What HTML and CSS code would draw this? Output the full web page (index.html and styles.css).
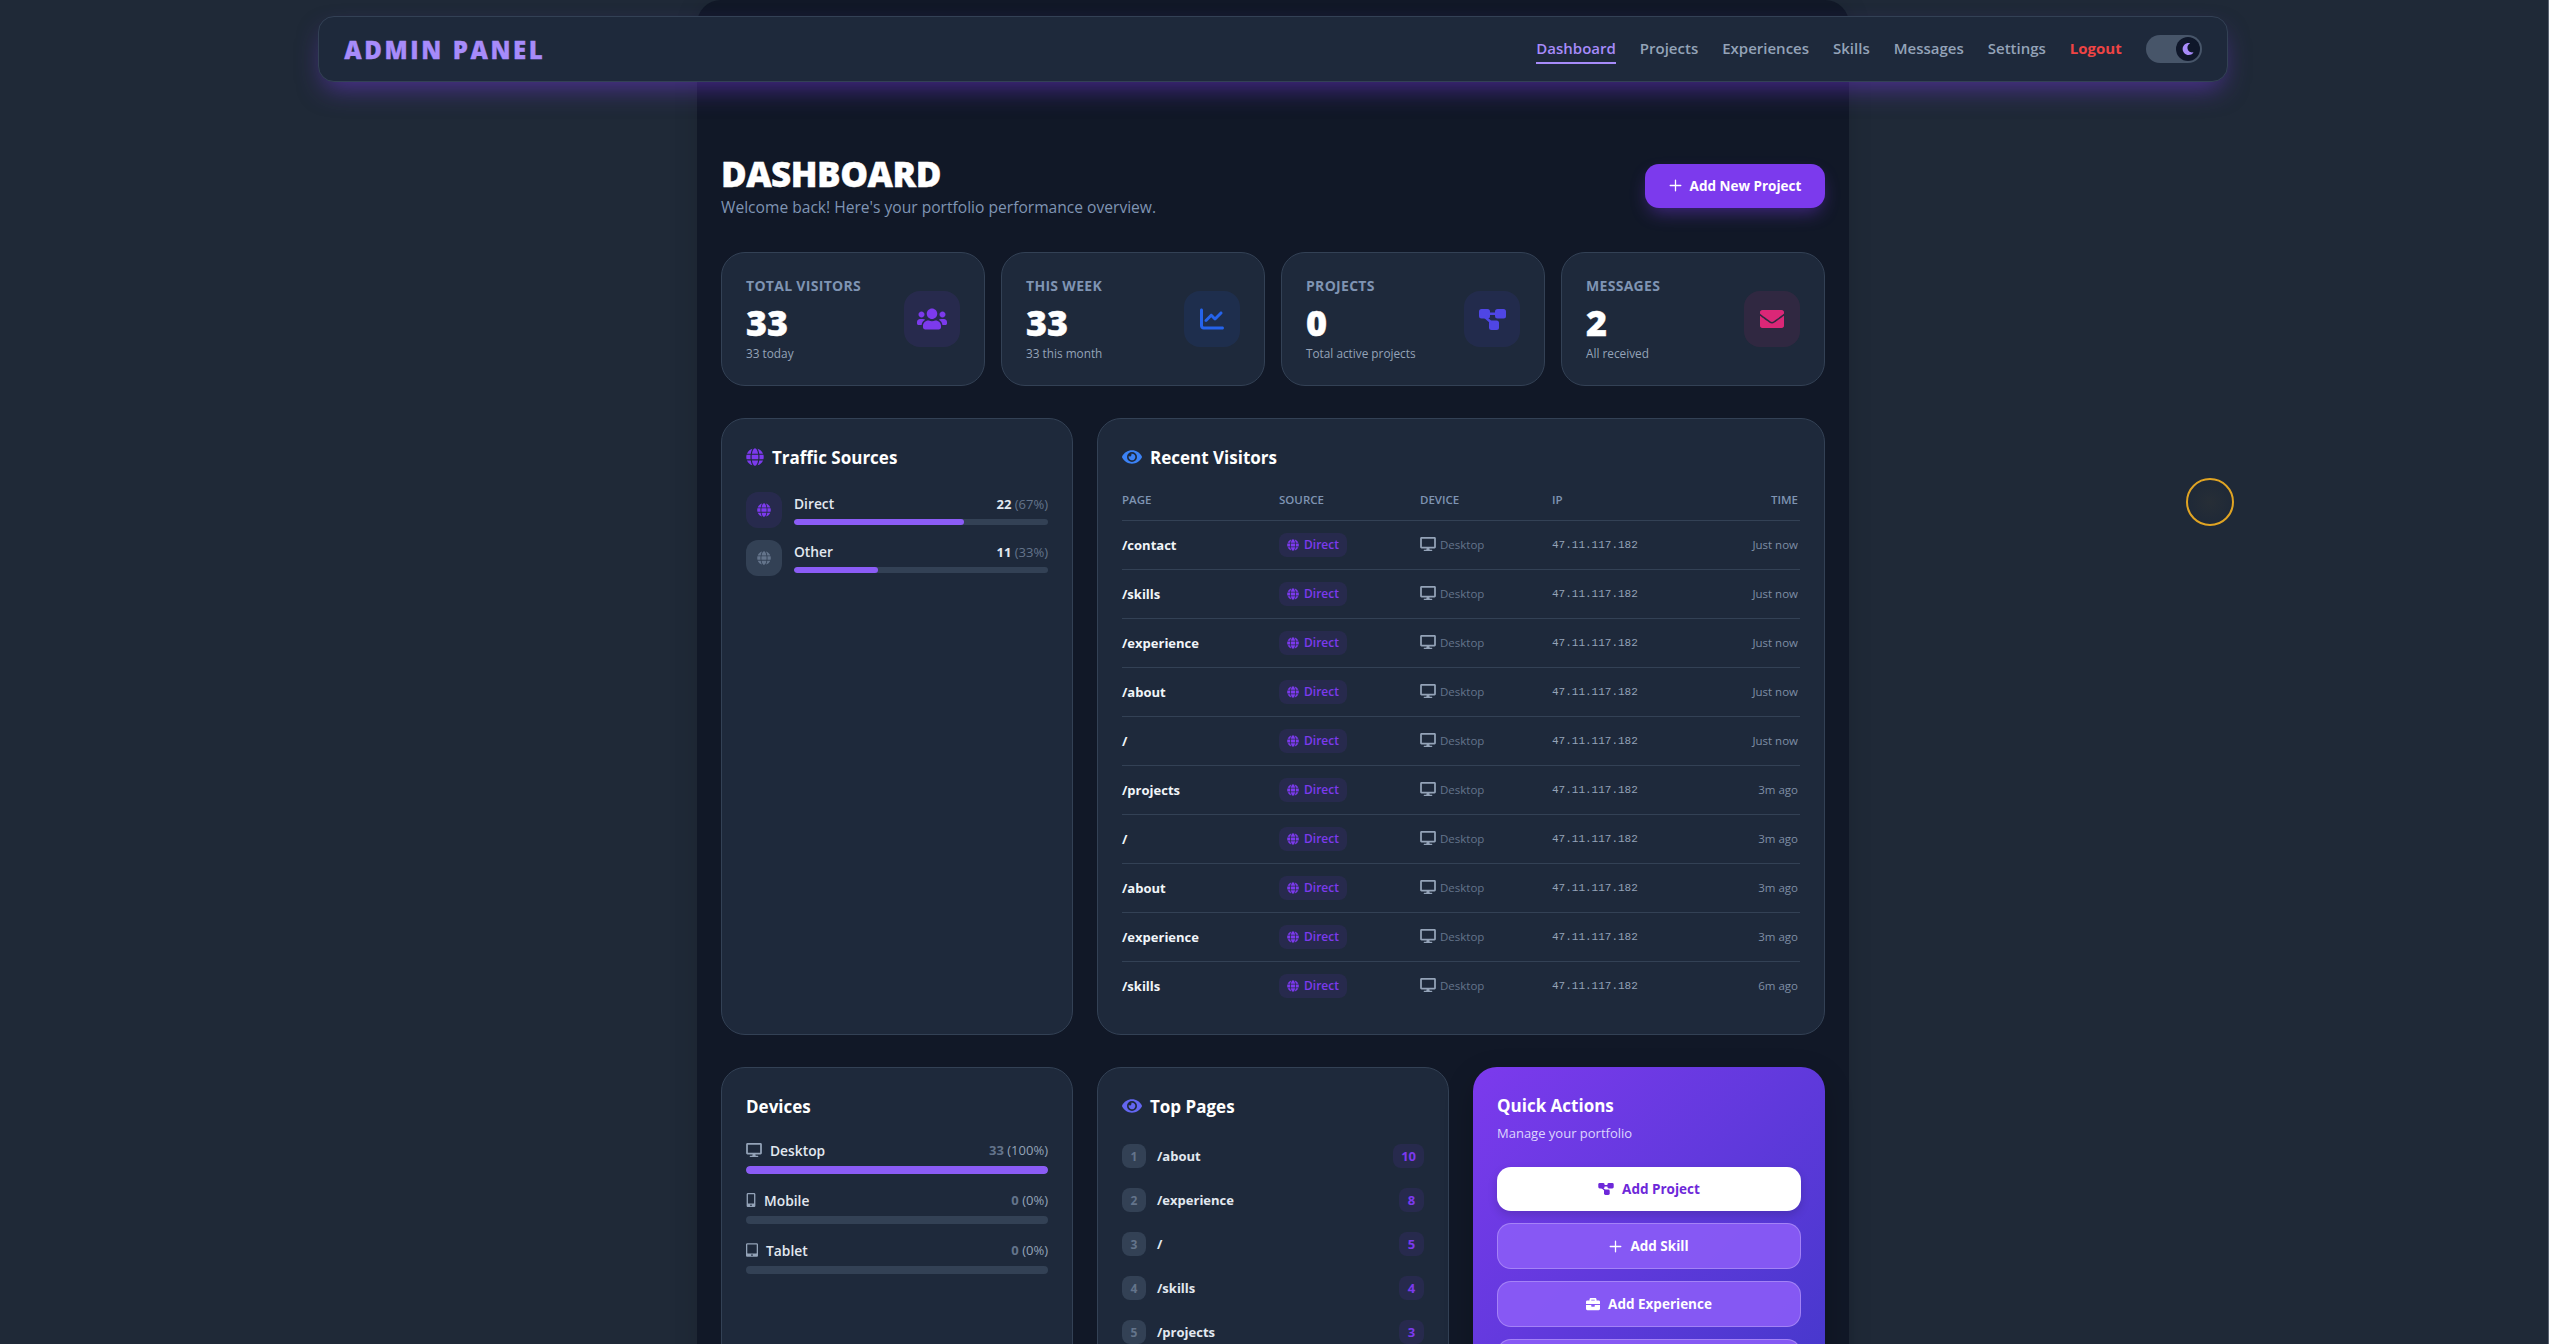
FILE: index.html
```html
<!DOCTYPE html>
<html lang="en">
<head>
    <meta charset="UTF-8" />
    <meta name="viewport" content="width=device-width, initial-scale=1.0"/>
    <title>Admin Panel</title>
    <link rel="stylesheet" href="styles.css">
</head>
<body>

<svg class="sprite" xmlns="http://www.w3.org/2000/svg">
    <symbol id="i-users" viewBox="0 0 640 512"><path d="M96 224c35.300 0 64-28.700 64-64s-28.700-64-64-64-64 28.700-64 64 28.700 64 64 64zm448 0c35.300 0 64-28.700 64-64s-28.700-64-64-64-64 28.700-64 64 28.700 64 64 64zm32 32h-64c-17.600 0-33.500 7.100-45.100 18.600 40.300 22.100 68.900 62 75.100 109.400h66c17.700 0 32-14.300 32-32v-32c0-35.300-28.700-64-64-64zm-256 0c61.900 0 112-50.100 112-112S381.900 32 320 32 208 82.100 208 144s50.100 112 112 112zm76.800 32h-8.300c-20.800 10-43.900 16-68.500 16s-47.600-6-68.500-16h-8.300C179.600 288 128 339.600 128 403.200V432c0 26.500 21.500 48 48 48h288c26.500 0 48-21.500 48-48v-28.800c0-63.600-51.600-115.200-115.200-115.200zm-223.700-13.400C161.500 263.100 145.600 256 128 256H64c-35.300 0-64 28.700-64 64v32c0 17.700 14.300 32 32 32h65.900c6.300-47.400 34.900-87.300 75.200-109.400z"/></symbol>
    <symbol id="i-chart" viewBox="0 0 512 512"><path d="M64 64c0-17.700-14.300-32-32-32S0 46.300 0 64V400c0 44.200 35.800 80 80 80H480c17.700 0 32-14.300 32-32s-14.300-32-32-32H80c-8.800 0-16-7.200-16-16V64zm406.600 86.600c12.500-12.500 12.500-32.800 0-45.300s-32.800-12.500-45.300 0L320 210.700l-57.400-57.400c-12.500-12.500-32.800-12.500-45.300 0l-112 112c-12.500 12.500-12.500 32.800 0 45.300s32.800 12.500 45.300 0L240 221.300l57.400 57.400c12.500 12.500 32.800 12.500 45.300 0l128-128z"/></symbol>
    <symbol id="i-diagram" viewBox="0 0 27 21">
        <rect x="0" y="0" width="11" height="9.500" rx="2.500"/>
        <rect x="16" y="0" width="11" height="9.500" rx="2.500"/>
        <rect x="10" y="11.500" width="10" height="9.500" rx="2.500"/>
        <path d="M10 4.750h7M6 8l7.500 6.500" fill="none" stroke="currentColor" stroke-width="2.500"/>
    </symbol>
    <symbol id="i-envelope" viewBox="0 0 512 512"><path d="M502.300 190.800c3.900-3.100 9.700-.2 9.700 4.700V400c0 26.500-21.500 48-48 48H48c-26.500 0-48-21.500-48-48V195.600c0-5 5.700-7.800 9.700-4.700 22.400 17.400 52.100 39.500 154.100 113.600 21.100 15.400 56.700 47.800 92.200 47.600 35.700.3 72-32.800 92.300-47.600 102-74.100 131.600-96.300 154-113.700zM256 320c23.200.4 56.600-29.200 73.400-41.400 132.700-96.300 142.800-104.700 173.400-128.700 5.800-4.500 9.200-11.500 9.200-18.900v-19c0-26.500-21.500-48-48-48H48C21.500 64 0 85.500 0 112v19c0 7.400 3.400 14.300 9.200 18.900 30.600 23.900 40.700 32.400 173.400 128.700 16.800 12.200 50.200 41.800 73.400 41.400z"/></symbol>
    <symbol id="i-globe" viewBox="0 0 496 512"><path d="M336.500 160C322 70.700 287.800 8 248 8s-74 62.700-88.500 152h177zM152 256c0 22.200 1.200 43.500 3.300 64h185.300c2.100-20.500 3.300-41.800 3.300-64s-1.200-43.500-3.300-64H155.300c-2.100 20.500-3.300 41.800-3.300 64zm324.700-96c-28.600-67.900-86.500-120.400-158-141.600 24.400 33.800 41.200 84.700 50 141.600h108zM177.200 18.400C105.800 39.600 47.800 92.100 19.300 160h108c8.700-56.900 25.500-107.800 49.900-141.600zM487.400 192H372.700c2.100 21 3.300 42.500 3.300 64s-1.200 43-3.300 64h114.600c5.500-20.500 8.600-41.800 8.600-64s-3.100-43.500-8.500-64zM120 256c0-21.500 1.200-43 3.300-64H8.600C3.200 212.500 0 233.800 0 256s3.200 43.500 8.600 64h114.600c-2-21-3.200-42.500-3.200-64zm39.500 96c14.500 89.300 48.700 152 88.500 152s74-62.700 88.500-152h-177zm159.300 141.600c71.400-21.200 129.400-73.700 158-141.600h-108c-8.800 56.900-25.600 107.800-50 141.600zM19.300 352c28.600 67.900 86.500 120.400 158 141.600-24.400-33.800-41.200-84.700-50-141.600h-108z"/></symbol>
    <symbol id="i-eye" viewBox="0 0 576 512"><path d="M572.520 241.400C518.290 135.590 410.930 64 288 64S57.680 135.640 3.480 241.410a32.350 32.350 0 0 0 0 29.190C57.710 376.410 165.070 448 288 448s230.320-71.640 284.520-177.410a32.350 32.350 0 0 0 0-29.190zM288 400a144 144 0 1 1 144-144 143.930 143.930 0 0 1-144 144zm0-240a95.310 95.310 0 0 0-25.310 3.790 47.850 47.850 0 0 1-66.900 66.900A95.780 95.780 0 1 0 288 160z"/></symbol>
    <symbol id="i-desktop" viewBox="0 0 576 512"><path d="M528 0H48C21.500 0 0 21.500 0 48v320c0 26.500 21.500 48 48 48h192l-16 48h-72c-13.300 0-24 10.700-24 24s10.700 24 24 24h272c13.300 0 24-10.700 24-24s-10.700-24-24-24h-72l-16-48h192c26.500 0 48-21.500 48-48V48c0-26.500-21.500-48-48-48zm-16 352H64V64h448v288z"/></symbol>
    <symbol id="i-mobile" viewBox="0 0 320 512"><path d="M272 0H48C21.500 0 0 21.500 0 48v416c0 26.500 21.500 48 48 48h224c26.500 0 48-21.500 48-48V48c0-26.500-21.500-48-48-48zM160 480c-17.700 0-32-14.300-32-32s14.300-32 32-32 32 14.300 32 32-14.300 32-32 32zm112-108c0 6.600-5.400 12-12 12H60c-6.600 0-12-5.400-12-12V60c0-6.600 5.400-12 12-12h200c6.600 0 12 5.400 12 12v312z"/></symbol>
    <symbol id="i-tablet" viewBox="0 0 448 512"><path d="M400 0H48C21.500 0 0 21.500 0 48v416c0 26.500 21.500 48 48 48h352c26.500 0 48-21.500 48-48V48c0-26.500-21.500-48-48-48zM224 480c-17.700 0-32-14.300-32-32s14.300-32 32-32 32 14.300 32 32-14.300 32-32 32zm176-108c0 6.600-5.400 12-12 12H60c-6.600 0-12-5.400-12-12V60c0-6.600 5.400-12 12-12h328c6.600 0 12 5.400 12 12v312z"/></symbol>
    <symbol id="i-plus" viewBox="0 0 16 16"><path d="M8 1.500v13M1.500 8h13" fill="none" stroke="currentColor" stroke-width="1.600" stroke-linecap="round"/></symbol>
    <symbol id="i-briefcase" viewBox="0 0 512 512"><path d="M320 336c0 8.840-7.160 16-16 16h-96c-8.840 0-16-7.160-16-16v-48H0v144c0 25.600 22.400 48 48 48h416c25.600 0 48-22.400 48-48V288H320v48zm144-208h-80V80c0-25.600-22.400-48-48-48H176c-25.600 0-48 22.400-48 48v48H48c-25.600 0-48 22.400-48 48v80h512v-80c0-25.600-22.400-48-48-48zm-144 0H192V96h128v32z"/></symbol>
    <symbol id="i-moon" viewBox="0 0 512 512"><path d="M283.211 512c78.962 0 151.079-35.925 198.857-94.792 7.068-8.708-.639-21.430-11.562-19.350-124.203 23.654-238.262-71.576-238.262-196.954 0-72.222 38.662-138.635 101.498-174.394 9.686-5.512 7.250-20.197-3.756-22.230A258.156 258.156 0 0 0 283.211 0c-141.309 0-256 114.511-256 256 0 141.309 114.511 256 256 256z"/></symbol>
</svg>

<div class="app">
    <div class="page">
        <nav class="navbar">
            <span class="logo">ADMIN PANEL</span>
            <div class="nav-links">
                <a class="active">Dashboard</a>
                <a>Projects</a>
                <a>Experiences</a>
                <a>Skills</a>
                <a>Messages</a>
                <a>Settings</a>
                <a class="logout">Logout</a>
                <div class="theme-toggle">
                    <span class="toggle-knob"><svg class="icon-moon"><use href="#i-moon"/></svg></span>
                </div>
            </div>
        </nav>

        <main class="main">
            <header class="page-head">
                <div>
                    <h1>DASHBOARD</h1>
                    <p>Welcome back! Here's your portfolio performance overview.</p>
                </div>
                <button class="add-btn"><svg class="icon-13"><use href="#i-plus"/></svg>Add New Project</button>
            </header>

            <section class="stats">
                <div class="card stat">
                    <div>
                        <div class="stat-label">TOTAL VISITORS</div>
                        <div class="stat-value">33</div>
                        <div class="stat-sub">33 today</div>
                    </div>
                    <div class="stat-icon purple"><svg class="icon-users"><use href="#i-users"/></svg></div>
                </div>
                <div class="card stat">
                    <div>
                        <div class="stat-label">THIS WEEK</div>
                        <div class="stat-value">33</div>
                        <div class="stat-sub">33 this month</div>
                    </div>
                    <div class="stat-icon blue"><svg class="icon-24"><use href="#i-chart"/></svg></div>
                </div>
                <div class="card stat">
                    <div>
                        <div class="stat-label">PROJECTS</div>
                        <div class="stat-value">0</div>
                        <div class="stat-sub">Total active projects</div>
                    </div>
                    <div class="stat-icon indigo"><svg class="icon-diagram"><use href="#i-diagram"/></svg></div>
                </div>
                <div class="card stat">
                    <div>
                        <div class="stat-label">MESSAGES</div>
                        <div class="stat-value">2</div>
                        <div class="stat-sub">All received</div>
                    </div>
                    <div class="stat-icon pink"><svg class="icon-24"><use href="#i-envelope"/></svg></div>
                </div>
            </section>

            <section class="row">
                <div class="card panel">
                    <h3 class="panel-title"><svg class="icon-18 c-purple"><use href="#i-globe"/></svg>Traffic Sources</h3>
                    <div class="sources">
                        <div class="source">
                            <span class="source-icon direct"><svg class="icon-14"><use href="#i-globe"/></svg></span>
                            <div class="source-body">
                                <div class="source-line"><span>Direct</span><span class="source-num"><b>22</b> (67%)</span></div>
                                <div class="bar thin"><div class="bar-fill" style="width:67%"></div></div>
                            </div>
                        </div>
                        <div class="source">
                            <span class="source-icon other"><svg class="icon-14"><use href="#i-globe"/></svg></span>
                            <div class="source-body">
                                <div class="source-line"><span>Other</span><span class="source-num"><b>11</b> (33%)</span></div>
                                <div class="bar thin"><div class="bar-fill" style="width:33%"></div></div>
                            </div>
                        </div>
                    </div>
                </div>

                <div class="card panel panel-wide">
                    <h3 class="panel-title"><svg class="icon-eye c-blue"><use href="#i-eye"/></svg>Recent Visitors</h3>
                    <table class="visitors">
                        <thead>
                            <tr><th class="col-page">PAGE</th><th class="col-source">SOURCE</th><th class="col-device">DEVICE</th><th class="col-ip">IP</th><th class="col-time">TIME</th></tr>
                        </thead>
                        <tbody>
                            <tr><td class="cell-page">/contact</td><td><span class="badge"><svg class="icon-12"><use href="#i-globe"/></svg>Direct</span></td><td class="cell-device"><svg class="icon-14"><use href="#i-desktop"/></svg>Desktop</td><td class="cell-ip">47.11.117.182</td><td class="cell-time">Just now</td></tr>
                            <tr><td class="cell-page">/skills</td><td><span class="badge"><svg class="icon-12"><use href="#i-globe"/></svg>Direct</span></td><td class="cell-device"><svg class="icon-14"><use href="#i-desktop"/></svg>Desktop</td><td class="cell-ip">47.11.117.182</td><td class="cell-time">Just now</td></tr>
                            <tr><td class="cell-page">/experience</td><td><span class="badge"><svg class="icon-12"><use href="#i-globe"/></svg>Direct</span></td><td class="cell-device"><svg class="icon-14"><use href="#i-desktop"/></svg>Desktop</td><td class="cell-ip">47.11.117.182</td><td class="cell-time">Just now</td></tr>
                            <tr><td class="cell-page">/about</td><td><span class="badge"><svg class="icon-12"><use href="#i-globe"/></svg>Direct</span></td><td class="cell-device"><svg class="icon-14"><use href="#i-desktop"/></svg>Desktop</td><td class="cell-ip">47.11.117.182</td><td class="cell-time">Just now</td></tr>
                            <tr><td class="cell-page">/</td><td><span class="badge"><svg class="icon-12"><use href="#i-globe"/></svg>Direct</span></td><td class="cell-device"><svg class="icon-14"><use href="#i-desktop"/></svg>Desktop</td><td class="cell-ip">47.11.117.182</td><td class="cell-time">Just now</td></tr>
                            <tr><td class="cell-page">/projects</td><td><span class="badge"><svg class="icon-12"><use href="#i-globe"/></svg>Direct</span></td><td class="cell-device"><svg class="icon-14"><use href="#i-desktop"/></svg>Desktop</td><td class="cell-ip">47.11.117.182</td><td class="cell-time">3m ago</td></tr>
                            <tr><td class="cell-page">/</td><td><span class="badge"><svg class="icon-12"><use href="#i-globe"/></svg>Direct</span></td><td class="cell-device"><svg class="icon-14"><use href="#i-desktop"/></svg>Desktop</td><td class="cell-ip">47.11.117.182</td><td class="cell-time">3m ago</td></tr>
                            <tr><td class="cell-page">/about</td><td><span class="badge"><svg class="icon-12"><use href="#i-globe"/></svg>Direct</span></td><td class="cell-device"><svg class="icon-14"><use href="#i-desktop"/></svg>Desktop</td><td class="cell-ip">47.11.117.182</td><td class="cell-time">3m ago</td></tr>
                            <tr><td class="cell-page">/experience</td><td><span class="badge"><svg class="icon-12"><use href="#i-globe"/></svg>Direct</span></td><td class="cell-device"><svg class="icon-14"><use href="#i-desktop"/></svg>Desktop</td><td class="cell-ip">47.11.117.182</td><td class="cell-time">3m ago</td></tr>
                            <tr><td class="cell-page">/skills</td><td><span class="badge"><svg class="icon-12"><use href="#i-globe"/></svg>Direct</span></td><td class="cell-device"><svg class="icon-14"><use href="#i-desktop"/></svg>Desktop</td><td class="cell-ip">47.11.117.182</td><td class="cell-time">6m ago</td></tr>
                        </tbody>
                    </table>
                </div>
            </section>

            <section class="row row-bottom">
                <div class="card panel">
                    <h3 class="panel-title">Devices</h3>
                    <div class="devices">
                        <div class="device">
                            <div class="device-line"><span class="device-name"><svg class="icon-desktop"><use href="#i-desktop"/></svg>Desktop</span><span class="device-num"><b>33</b> (100%)</span></div>
                            <div class="bar"><div class="bar-fill" style="width:100%"></div></div>
                        </div>
                        <div class="device">
                            <div class="device-line"><span class="device-name"><svg class="icon-phone"><use href="#i-mobile"/></svg>Mobile</span><span class="device-num"><b>0</b> (0%)</span></div>
                            <div class="bar"></div>
                        </div>
                        <div class="device">
                            <div class="device-line"><span class="device-name"><svg class="icon-tablet"><use href="#i-tablet"/></svg>Tablet</span><span class="device-num"><b>0</b> (0%)</span></div>
                            <div class="bar"></div>
                        </div>
                    </div>
                </div>

                <div class="card panel">
                    <h3 class="panel-title"><svg class="icon-eye c-indigo"><use href="#i-eye"/></svg>Top Pages</h3>
                    <div class="top-pages">
                        <div class="top-page"><span class="rank">1</span><span class="top-name">/about</span><span class="count">10</span></div>
                        <div class="top-page"><span class="rank">2</span><span class="top-name">/experience</span><span class="count">8</span></div>
                        <div class="top-page"><span class="rank">3</span><span class="top-name">/</span><span class="count">5</span></div>
                        <div class="top-page"><span class="rank">4</span><span class="top-name">/skills</span><span class="count">4</span></div>
                        <div class="top-page"><span class="rank">5</span><span class="top-name">/projects</span><span class="count">3</span></div>
                    </div>
                </div>

                <div class="quick">
                    <h3>Quick Actions</h3>
                    <p>Manage your portfolio</p>
                    <div class="quick-list">
                        <a class="quick-btn primary"><svg class="icon-small-diagram"><use href="#i-diagram"/></svg>Add Project</a>
                        <a class="quick-btn"><svg class="icon-13"><use href="#i-plus"/></svg>Add Skill</a>
                        <a class="quick-btn"><svg class="icon-14"><use href="#i-briefcase"/></svg>Add Experience</a>
                        <a class="quick-btn"></a>
                    </div>
                </div>
            </section>
        </main>

        <div class="cursor-ring"></div>
    </div>
    <div class="scrollbar"></div>
</div>

</body>
</html>
```

FILE: styles.css
```css
* {
  box-sizing: border-box;
}

html, body {
  height: 100%;
  margin: 0;
}

body {
  font-family: 'Open Sans', 'Noto Sans', sans-serif;
  background-color: #1f2937;
  color: #f1f5f9;
  overflow: hidden;
}

svg {
  fill: currentColor;
  flex-shrink: 0;
}

.sprite {
  display: none;
}

.app {
  display: flex;
  height: 100vh;
  overflow: hidden;
}

.page {
  position: relative;
  flex: 1;
  min-width: 0;
  overflow: hidden;
}

.scrollbar {
  width: 3px;
  border-right: 1px solid #5b6472;
  background: #1f2937;
}

/* navbar floats above the page */
.navbar {
  position: absolute;
  top: 16px;
  left: 12.5%;
  width: 75%;
  height: 66px;
  padding: 0 25px;
  display: flex;
  align-items: center;
  justify-content: space-between;
  background: #1e293b;
  border: 1px solid #334155;
  border-radius: 16px;
  box-shadow: 0 12px 26px -6px rgba(124, 58, 237, 0.5);
  z-index: 5;
}

.logo {
  font-size: 24px;
  font-weight: 800;
  letter-spacing: 2.6px;
  color: #a78bfa;
  -webkit-text-stroke: 0.3px #a78bfa;
}

.nav-links {
  display: flex;
  align-items: center;
  gap: 24px;
}

.nav-links a {
  font-size: 15px;
  font-weight: 600;
  color: #94a3b8;
  padding: 4px 0;
  border-bottom: 2px solid transparent;
}

.nav-links a.active {
  color: #a78bfa;
  border-bottom-color: #a78bfa;
}

.nav-links a.logout {
  color: #ef4444;
  font-weight: 700;
}

.theme-toggle {
  width: 56px;
  height: 28px;
  background: #475569;
  border-radius: 14px;
  display: flex;
  justify-content: flex-end;
  align-items: center;
  padding-right: 2px;
}

.toggle-knob {
  width: 24px;
  height: 24px;
  border-radius: 50%;
  background: #0f172a;
  display: flex;
  align-items: center;
  justify-content: center;
  color: #a78bfa;
}

.icon-moon {
  width: 12px;
  height: 12px;
}

/* main column */
.main {
  width: 1152px;
  margin: 0 auto;
  padding: 154px 24px 40px;
  background: #111827;
  border-radius: 24px 24px 0 0;
  box-shadow: 0 0 24px rgba(0, 0, 0, 0.12);
}

.page-head {
  display: flex;
  align-items: center;
  justify-content: space-between;
  margin-bottom: 35px;
}

.page-head h1 {
  margin: 0;
  font-size: 35px;
  line-height: 40px;
  font-weight: 800;
  color: #fff;
  letter-spacing: -0.5px;
  -webkit-text-stroke: 0.4px #fff;
}

.page-head p {
  margin: 3px 0 0;
  font-size: 15.6px;
  line-height: 20px;
  color: #7f94b3;
}

.add-btn {
  height: 44px;
  width: 180px;
  border: none;
  border-radius: 14px;
  background: #7c3aed;
  color: #fff;
  font-family: inherit;
  font-size: 13.5px;
  font-weight: 700;
  display: flex;
  align-items: center;
  justify-content: center;
  gap: 8px;
  box-shadow: 0 8px 18px -4px rgba(124, 58, 237, 0.45);
}

.card {
  background: #1e293b;
  border: 1px solid #334155;
  border-radius: 24px;
}

.stats {
  display: grid;
  grid-template-columns: repeat(4, 1fr);
  gap: 16px;
  margin-bottom: 32px;
}

.stat {
  height: 134px;
  padding: 24px;
  display: flex;
  align-items: center;
  justify-content: space-between;
}

.stat-label {
  font-size: 14px;
  line-height: 18px;
  font-weight: 700;
  letter-spacing: 0.3px;
  color: #7f94b3;
}

.stat-value {
  margin-top: 6px;
  font-size: 36px;
  line-height: 44px;
  font-weight: 800;
  color: #fff;
  -webkit-text-stroke: 0.4px #fff;
}

.stat-sub {
  font-size: 11.8px;
  line-height: 16px;
  color: #94a3b8;
}

.stat-icon {
  width: 56px;
  height: 56px;
  border-radius: 16px;
  display: flex;
  align-items: center;
  justify-content: center;
}

.stat-icon.purple { background: rgba(124, 58, 237, 0.1); color: #7c3aed; }
.stat-icon.blue   { background: rgba(37, 99, 235, 0.1); color: #2563eb; }
.stat-icon.indigo { background: rgba(79, 70, 229, 0.1); color: #4f46e5; }
.stat-icon.pink   { background: rgba(219, 39, 119, 0.1); color: #db2777; }

.icon-users { width: 30px; height: 24px; }
.icon-diagram { width: 27px; height: 21px; }
.icon-small-diagram { width: 16px; height: 12px; }
.icon-24 { width: 24px; height: 24px; }
.icon-18 { width: 18px; height: 18px; }
.icon-eye { width: 20px; height: 18px; }
.icon-14 { width: 14px; height: 14px; }
.icon-13 { width: 13px; height: 13px; }
.icon-12 { width: 12px; height: 12px; }
.icon-desktop { width: 16px; height: 14px; }
.icon-phone { width: 10px; height: 14px; }
.icon-tablet { width: 12px; height: 14px; }

.c-purple { color: #7c3aed; }
.c-blue { color: #3b82f6; }
.c-indigo { color: #6366f1; }

.row {
  display: grid;
  grid-template-columns: 352px 1fr;
  gap: 24px;
  margin-bottom: 32px;
}

.row-bottom {
  grid-template-columns: repeat(3, 352px);
}

.panel {
  padding: 24px;
}

.panel-title {
  margin: 0;
  height: 30px;
  padding-bottom: 2px;
  display: flex;
  align-items: center;
  gap: 8px;
  font-size: 17px;
  font-weight: 700;
  color: #fff;
}

.sources {
  margin-top: 19px;
  display: flex;
  flex-direction: column;
  gap: 12px;
}

.source {
  display: flex;
  align-items: center;
  gap: 12px;
}

.source-icon {
  width: 36px;
  height: 36px;
  border-radius: 12px;
  display: flex;
  align-items: center;
  justify-content: center;
}

.source-icon.direct { background: rgba(124, 58, 237, 0.1); color: #7c3aed; }
.source-icon.other { background: #334155; color: #64748b; }

.source-body {
  flex: 1;
}

.source-line,
.device-line {
  display: flex;
  justify-content: space-between;
  align-items: center;
  font-size: 13.8px;
  font-weight: 600;
  color: #e2e8f0;
}

.source-line {
  line-height: 18px;
  margin-bottom: 6px;
}

.source-num {
  font-size: 13px;
  font-weight: 400;
  color: #64748b;
}

.source-num b {
  font-weight: 700;
  color: #e2e8f0;
}

.bar {
  height: 8px;
  background: #334155;
  border-radius: 999px;
  overflow: hidden;
}

.bar.thin {
  height: 6px;
}

.bar-fill {
  height: 100%;
  background: #8b5cf6;
  border-radius: 999px;
}

/* recent visitors */
.visitors {
  width: 100%;
  margin-top: 18px;
  table-layout: fixed;
  border-collapse: collapse;
}

.visitors th {
  height: 29px;
  padding: 0 0 11px;
  text-align: left;
  font-size: 11.5px;
  font-weight: 600;
  color: #7f94b3;
  border-bottom: 1px solid #334155;
}

.col-page { width: 157px; }
.col-source { width: 141px; }
.col-device { width: 132px; }
.col-ip { width: 130px; }

.visitors th.col-time,
.cell-time {
  text-align: right;
  padding-right: 2px;
}

.visitors td {
  height: 49px;
  padding: 0;
  border-bottom: 1px solid #334155;
}

.visitors td.cell-time {
  padding-right: 2px;
}

.visitors tr:last-child td {
  border-bottom: none;
}

.cell-page {
  font-size: 13px;
  font-weight: 700;
  color: #f1f5f9;
}

.badge {
  display: inline-flex;
  align-items: center;
  gap: 5px;
  height: 24px;
  padding: 0 8px;
  border-radius: 8px;
  background: rgba(124, 58, 237, 0.1);
  color: #7c3aed;
  font-size: 12px;
  font-weight: 600;
}

.cell-device {
  font-size: 11.5px;
  color: #64748b;
}

.cell-device svg {
  color: #94a3b8;
  width: 16px;
  margin-right: 4px;
  vertical-align: -2px;
}

.cell-ip {
  font-family: 'Liberation Mono', monospace;
  font-size: 11px;
  color: #94a3b8;
}

.cell-time {
  font-size: 11.5px;
  color: #7f8ea5;
}

/* devices */
.devices {
  margin-top: 14px;
}

.device {
  margin-bottom: 12px;
}

.device-line {
  height: 28px;
  margin-bottom: 2px;
}

.device-name {
  display: flex;
  align-items: center;
  gap: 8px;
}

.device-name svg {
  color: #94a3b8;
}

.device-num {
  font-size: 13px;
  font-weight: 400;
  color: #94a3b8;
}

.device-num b {
  font-weight: 700;
  color: #64748b;
}

/* top pages */
.top-pages {
  margin-top: 22px;
  display: flex;
  flex-direction: column;
  gap: 20px;
}

.top-page {
  display: flex;
  align-items: center;
  gap: 11px;
}

.rank {
  width: 24px;
  height: 24px;
  border-radius: 8px;
  background: #334155;
  color: #64748b;
  font-size: 12px;
  font-weight: 700;
  display: flex;
  align-items: center;
  justify-content: center;
}

.top-name {
  flex: 1;
  font-size: 13px;
  font-weight: 700;
  color: #e2e8f0;
}

.count {
  height: 24px;
  min-width: 25px;
  padding: 0 8px;
  border-radius: 8px;
  background: rgba(124, 58, 237, 0.1);
  color: #7c3aed;
  font-size: 13px;
  font-weight: 700;
  display: flex;
  align-items: center;
  justify-content: center;
}

/* quick actions */
.quick {
  padding: 24px;
  border-radius: 24px;
  background: linear-gradient(135deg, #7c3aed, #4338ca);
  box-shadow: 0 10px 30px rgba(0, 0, 0, 0.2);
}

.quick h3 {
  margin: 0;
  font-size: 17px;
  line-height: 30px;
  font-weight: 700;
  color: #fff;
}

.quick p {
  margin: 0;
  font-size: 13px;
  line-height: 24px;
  color: #ddd6fe;
}

.quick-list {
  margin-top: 22px;
  display: flex;
  flex-direction: column;
  gap: 12px;
}

.quick-btn {
  height: 46px;
  display: flex;
  align-items: center;
  justify-content: center;
  gap: 8px;
  border: 1px solid rgba(255, 255, 255, 0.25);
  border-radius: 14px;
  background: rgba(139, 92, 246, 0.9);
  color: #fff;
  font-size: 13.5px;
  font-weight: 700;
}

.quick-btn.primary {
  height: 44px;
  border: none;
  background: #fff;
  color: #6d28d9;
  box-shadow: 0 4px 10px rgba(0, 0, 0, 0.15);
}

/* cursor follower sits over the page */
.cursor-ring {
  position: absolute;
  left: 2186px;
  top: 478px;
  width: 48px;
  height: 48px;
  border: 2px solid #e0a423;
  border-radius: 50%;
  background: radial-gradient(circle, rgba(224, 164, 35, 0.04), transparent 70%);
}
```
